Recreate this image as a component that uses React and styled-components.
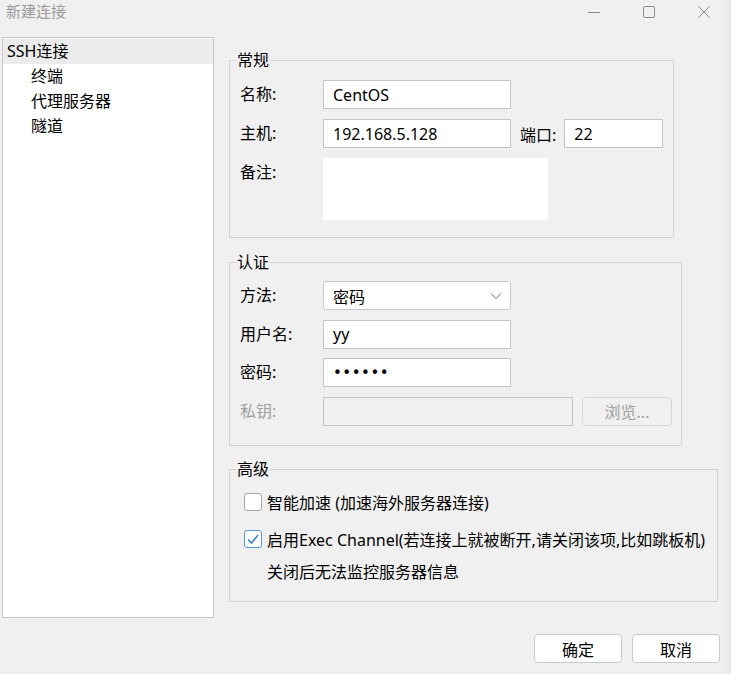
import styled, { createGlobalStyle } from "styled-components";

const GlobalStyle = createGlobalStyle`
  html, body {
    margin: 0;
    padding: 0;
    background: #f0f0f0;
  }
  body {
    font-family: "Noto Sans", "Noto Sans CJK SC", sans-serif;
    font-size: 16px;
    color: #000;
  }
`;

const Window = styled.div`
  width: 731px;
  height: 674px;
  display: flex;
  flex-direction: column;
  overflow: hidden;
  background: linear-gradient(to right, #f0f0f0 724px, #e6e6e6 731px);
`;

const TitleBar = styled.div`
  height: 24px;
  display: flex;
  align-items: center;
  justify-content: space-between;
  padding: 0 0 0 6px;
`;

const Title = styled.div`
  font-size: 15px;
  color: #9a9a9a;
  margin-top: -4px;
`;

const Controls = styled.div`
  display: flex;
  align-items: center;
`;

const ControlButton = styled.div`
  width: 55px;
  height: 24px;
  display: flex;
  align-items: center;
  justify-content: center;
`;

const Body = styled.div`
  display: flex;
  align-items: flex-start;
  padding: 13px 0 0 2px;
`;

const Tree = styled.div`
  width: 210px;
  height: 578px;
  background: #fff;
  border: 1px solid #c8c8c8;
  padding-top: 1px;
`;

const TreeItem = styled.div`
  height: 25px;
  line-height: 25px;
  padding-left: ${p => (p.$child ? 28 : 4)}px;
  background: ${p => (p.$selected ? "#ececec" : "transparent")};
  white-space: nowrap;
`;

const Right = styled.div`
  display: flex;
  flex-direction: column;
  margin-left: 15px;
  margin-top: 13px;
`;

const Group = styled.fieldset`
  width: ${p => p.$width}px;
  box-sizing: border-box;
  margin: ${p => p.$gap || 0}px 0 0;
  padding: ${p => p.$pad || "9px 0 17px 10px"};
  border: 1px solid #d2d2d2;
  min-inline-size: 0;
`;

const Legend = styled.legend`
  margin-left: -4px;
  padding: 0 1px;
  line-height: 21px;
`;

const Rows = styled.div`
  display: flex;
  flex-direction: column;
  gap: ${p => p.$gap || 10}px;
`;

const Row = styled.div`
  display: flex;
  align-items: ${p => (p.$top ? "flex-start" : "center")};
`;

const Label = styled.div`
  width: 83px;
  flex: none;
  color: ${p => (p.$disabled ? "#a0a0a0" : "#000")};
  line-height: 29px;
  white-space: nowrap;
`;

const Input = styled.div`
  width: ${p => p.$width || 188}px;
  height: 29px;
  flex: none;
  box-sizing: border-box;
  border: 1px solid #c4c4c4;
  background: ${p => (p.$disabled ? "#f0f0f0" : "#fff")};
  padding-left: 9px;
  display: flex;
  align-items: center;
  white-space: nowrap;
`;

const TextArea = styled.div`
  width: 225px;
  height: 62px;
  background: #fff;
`;

const Select = styled(Input)`
  border-radius: 3px;
  justify-content: space-between;
  padding-right: 8px;
  border-color: #c8c8c8;
`;

const Dots = styled.span`
  letter-spacing: 0.5px;
  font-family: "DejaVu Sans", sans-serif;
  font-size: 15px;
`;

const InlineLabel = styled.div`
  margin: 0 8px 0 9px;
  white-space: nowrap;
`;

const Button = styled.div`
  width: ${p => p.$width || 88}px;
  height: 29px;
  flex: none;
  margin-left: ${p => p.$offset || 0}px;
  box-sizing: border-box;
  border: 1px solid ${p => (p.$disabled ? "#d6d6d6" : "#c9c9c9")};
  border-radius: 4px;
  background: ${p => (p.$disabled ? "#f0f0f0" : "#fff")};
  color: ${p => (p.$disabled ? "#a0a0a0" : "#000")};
  display: flex;
  align-items: center;
  justify-content: center;
`;

const CheckRow = styled.div`
  display: flex;
  align-items: center;
  height: 22px;
  margin-top: ${p => p.$space || 0}px;
  padding-left: ${p => (p.$indent ? 27 : 0)}px;
  white-space: nowrap;
`;

const Box = styled.div`
  width: 18px;
  height: 18px;
  flex: none;
  box-sizing: border-box;
  border: 1px solid ${p => (p.$checked ? "#5b9bd5" : "#a8a8a8")};
  border-radius: 3px;
  background: #fff;
  margin: 0 5px 0 4px;
  display: flex;
  align-items: center;
  justify-content: center;
`;

const Footer = styled.div`
  display: flex;
  justify-content: flex-end;
  gap: 10px;
  padding: 16px 11px 0 0;
`;

const Chevron = () => (
  <svg width="12" height="8" viewBox="0 0 12 8">
    <path d="M1 1.5 L6 6.5 L11 1.5" fill="none" stroke="#666" strokeWidth="1" />
  </svg>
);

const Check = () => (
  <svg width="14" height="14" viewBox="0 0 14 14">
    <path d="M2 7.5 L5.5 11 L12 3" fill="none" stroke="#3c84d0" strokeWidth="1.6" />
  </svg>
);

const App = () => {
  return (
    <Window>
      <GlobalStyle />
      <TitleBar>
        <Title>新建连接</Title>
        <Controls>
          <ControlButton>
            <svg width="12" height="12" viewBox="0 0 12 12">
              <path d="M0 6.5 H12" stroke="#8a8a8a" strokeWidth="1" />
            </svg>
          </ControlButton>
          <ControlButton>
            <svg width="12" height="12" viewBox="0 0 12 12">
              <rect x="0.5" y="0.5" width="11" height="11" rx="1.5" fill="none" stroke="#8a8a8a" />
            </svg>
          </ControlButton>
          <ControlButton>
            <svg width="12" height="12" viewBox="0 0 12 12">
              <path d="M0.5 0.5 L11.5 11.5 M11.5 0.5 L0.5 11.5" stroke="#8a8a8a" strokeWidth="1" />
            </svg>
          </ControlButton>
        </Controls>
      </TitleBar>
      <Body>
        <Tree>
          <TreeItem $selected>SSH连接</TreeItem>
          <TreeItem $child>终端</TreeItem>
          <TreeItem $child>代理服务器</TreeItem>
          <TreeItem $child>隧道</TreeItem>
        </Tree>
        <Right>
          <Group $width={445}>
            <Legend>常规</Legend>
            <Rows>
              <Row>
                <Label>名称:</Label>
                <Input>CentOS</Input>
              </Row>
              <Row>
                <Label>主机:</Label>
                <Input>192.168.5.128</Input>
                <InlineLabel>端口:</InlineLabel>
                <Input $width={99}>22</Input>
              </Row>
              <Row $top>
                <Label>备注:</Label>
                <TextArea />
              </Row>
            </Rows>
          </Group>
          <Group $width={453} $gap={14} $pad="8px 0 19px 10px">
            <Legend>认证</Legend>
            <Rows $gap={9.5}>
              <Row>
                <Label>方法:</Label>
                <Select>
                  <span>密码</span>
                  <Chevron />
                </Select>
              </Row>
              <Row>
                <Label>用户名:</Label>
                <Input>yy</Input>
              </Row>
              <Row>
                <Label>密码:</Label>
                <Input><Dots>••••••</Dots></Input>
              </Row>
              <Row>
                <Label $disabled>私钥:</Label>
                <Input $width={250} $disabled />
                <Button $disabled $width={90} $offset={9}>浏览...</Button>
              </Row>
            </Rows>
          </Group>
          <Group $width={489} $gap={13} $pad="11px 0 19px 10px">
            <Legend>高级</Legend>
            <CheckRow>
              <Box />
              <span>智能加速 (加速海外服务器连接)</span>
            </CheckRow>
            <CheckRow $space={15}>
              <Box $checked><Check /></Box>
              <span>启用Exec Channel(若连接上就被断开,请关闭该项,比如跳板机)</span>
            </CheckRow>
            <CheckRow $space={10} $indent>关闭后无法监控服务器信息</CheckRow>
          </Group>
        </Right>
      </Body>
      <Footer>
        <Button>确定</Button>
        <Button>取消</Button>
      </Footer>
    </Window>
  );
};

export default App;
